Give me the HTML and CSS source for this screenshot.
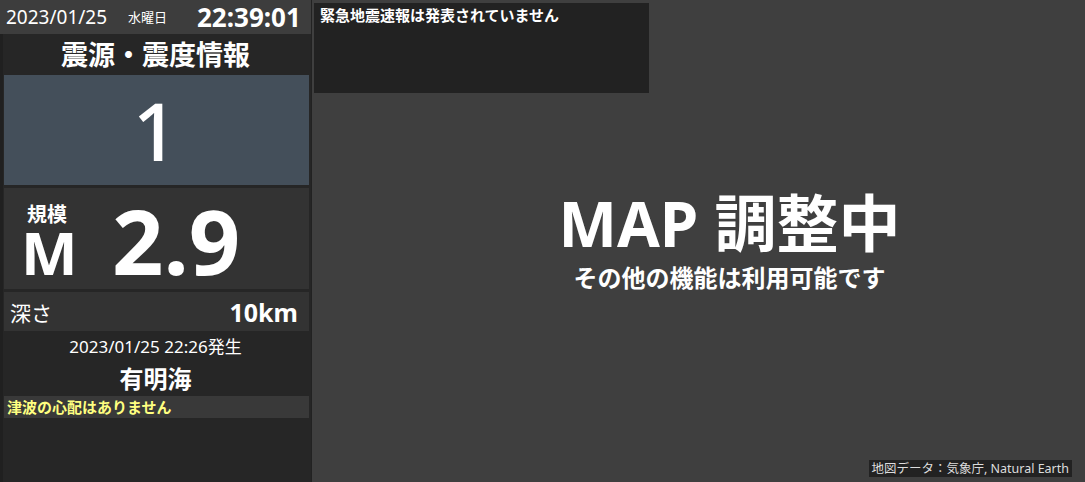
FILE: index.html
```html
<!DOCTYPE html>
<html lang="ja">
<head>
<meta charset="utf-8">
<title>震源・震度情報</title>
<link rel="stylesheet" href="styles.css">
</head>
<body>
<div class="app">
  <aside class="panel">
    <header class="clock">
      <span class="clock-date">2023/01/25</span>
      <span class="clock-day">水曜日</span>
      <span class="clock-time">22:39:01</span>
    </header>
    <div class="panel-body">
      <h1 class="title">震源・震度情報</h1>
      <div class="intensity">1</div>
      <div class="magnitude">
        <div class="mag-label">
          <span class="mag-kibo">規模</span>
          <span class="mag-m">M</span>
        </div>
        <div class="mag-value">2.9</div>
      </div>
      <div class="depth">
        <span class="depth-label">深さ</span>
        <span class="depth-value">10km</span>
      </div>
      <div class="origin-time">2023/01/25 22:26発生</div>
      <div class="epicenter">有明海</div>
      <div class="tsunami">津波の心配はありません</div>
    </div>
  </aside>
  <main class="map">
    <div class="eew">緊急地震速報は発表されていません</div>
    <div class="map-message">
      <div class="map-title">MAP 調整中</div>
      <div class="map-sub">その他の機能は利用可能です</div>
    </div>
    <div class="attribution">地図データ：気象庁, Natural Earth</div>
  </main>
</div>
</body>
</html>
```

FILE: styles.css
```css
* { box-sizing: border-box; margin: 0; padding: 0; }
html, body {
  width: 1085px;
  height: 482px;
  overflow: hidden;
}
body {
  background: #3f3f3f;
  color: #ffffff;
  font-family: "Noto Sans", "Noto Sans CJK JP", sans-serif;
}
.app {
  display: flex;
  height: 482px;
}
.panel {
  width: 312px;
  flex: none;
  display: flex;
  flex-direction: column;
  background: #262626;
  border-left: 3px solid #202020;
  border-right: 1px solid #222222;
}
.clock {
  height: 34px;
  margin-left: -3px;
  background: #3d3d3d;
  display: flex;
  align-items: center;
  padding-left: 6px;
  line-height: 1;
  white-space: nowrap;
}
.clock-date {
  font-size: 19px;
  width: 122px;
}
.clock-day {
  font-size: 13px;
  width: 69px;
}
.clock-time {
  font-size: 26px;
  font-weight: 700;
  padding-bottom: 1px;
}
.panel-body {
  flex: 1;
  display: flex;
  flex-direction: column;
  padding: 0 2px 0 1px;
}
.title {
  height: 41px;
  font-size: 27px;
  font-weight: 700;
  line-height: 41px;
  text-align: center;
  padding-right: 2px;
}
.intensity {
  height: 110px;
  background: #444f5a;
  font-size: 80px;
  font-weight: 500;
  line-height: 110px;
  text-align: center;
  padding-right: 2px;
}
.magnitude {
  margin-top: 3px;
  height: 101px;
  background: #333333;
  display: flex;
  align-items: center;
  padding-left: 17px;
}
.mag-label {
  width: 91px;
  display: flex;
  flex-direction: column;
  align-items: flex-start;
  padding-top: 4px;
}
.mag-kibo {
  font-size: 20px;
  font-weight: 700;
  line-height: 20px;
  margin-left: 6px;
}
.mag-m {
  font-size: 60px;
  font-weight: 700;
  line-height: 50px;
  margin-top: 2px;
}
.mag-value {
  font-size: 90px;
  font-weight: 700;
  line-height: 1;
  padding-top: 2px;
}
.depth {
  margin-top: 3px;
  height: 39px;
  background: #333333;
  display: flex;
  align-items: center;
  justify-content: space-between;
  padding: 0 11px 0 6px;
}
.depth-label {
  font-size: 21px;
}
.depth-value {
  font-size: 25px;
  font-weight: 700;
}
.origin-time {
  height: 31px;
  font-size: 17px;
  line-height: 31px;
  text-align: center;
  padding-right: 2px;
}
.epicenter {
  height: 34px;
  font-size: 24px;
  font-weight: 700;
  line-height: 34px;
  text-align: center;
  padding-right: 2px;
}
.tsunami {
  height: 22px;
  background: #393939;
  color: #ffff80;
  font-size: 15px;
  font-weight: 700;
  line-height: 22px;
  padding-left: 3px;
}
.map {
  flex: 1;
  position: relative;
  display: flex;
  align-items: center;
  justify-content: center;
  padding-left: 62px;
}
.eew {
  position: absolute;
  left: 2px;
  top: 3px;
  width: 335px;
  height: 90px;
  background: #222222;
  font-size: 15px;
  font-weight: 700;
  line-height: 1;
  padding: 5px 0 0 6px;
}
.map-message {
  display: flex;
  flex-direction: column;
  align-items: center;
}
.map-title {
  font-size: 62px;
  font-weight: 700;
  line-height: 62px;
}
.map-sub {
  font-size: 24px;
  font-weight: 700;
  line-height: 26px;
  margin-top: 11px;
}
.attribution {
  position: absolute;
  right: 13px;
  bottom: 5px;
  height: 17px;
  background: #222222;
  color: #dddddd;
  font-size: 12.5px;
  line-height: 17px;
  padding: 0 3px 0 2px;
}
```
